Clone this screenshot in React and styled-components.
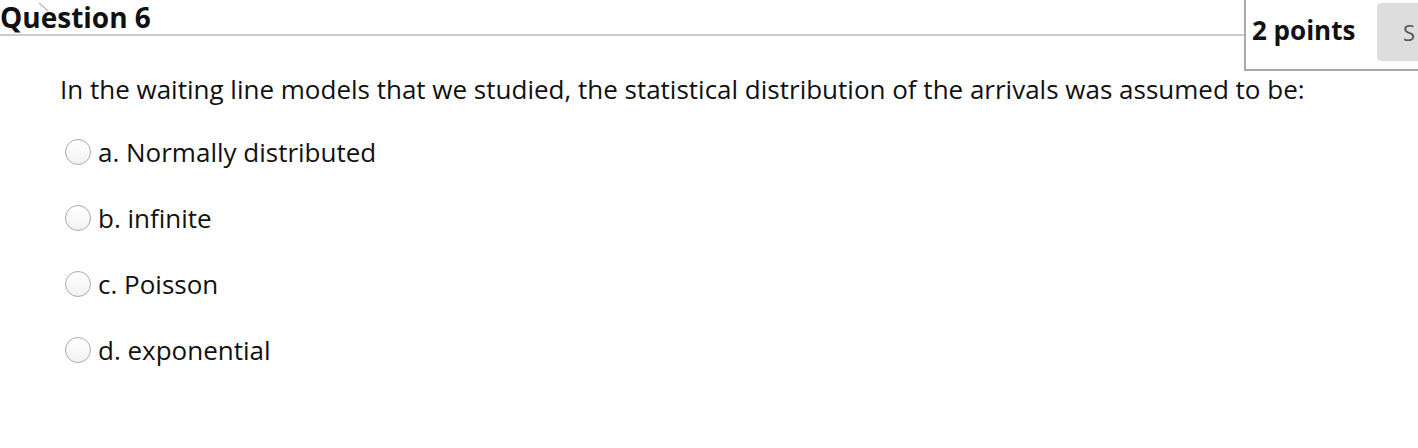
import React from 'react'
import styled, { createGlobalStyle } from 'styled-components'

const Global = createGlobalStyle`
  html, body {
    margin: 0;
    padding: 0;
    background: #fff;
  }
  body {
    font-family: 'Open Sans', 'Liberation Sans', sans-serif;
    color: #111;
    overflow: hidden;
  }
`

const Page = styled.div`
  width: 1418px;
  height: 448px;
  position: relative;
`

const Header = styled.div`
  display: flex;
  align-items: flex-start;
`

const Title = styled.h2`
  flex: 1;
  margin: 0;
  height: 34px;
  line-height: 34px;
  font-size: 28px;
  font-weight: 700;
  color: #111;
  border-bottom: 2px solid #ccc;
`

const PointsBox = styled.div`
  display: flex;
  align-items: flex-start;
  height: 69px;
  width: 166px;
  padding-left: 6px;
  border-left: 2px solid #aaa;
  border-bottom: 2px solid #aaa;
  flex: none;
`

const Points = styled.span`
  width: 125px;
  flex: none;
  white-space: nowrap;
  font-size: 26px;
  font-weight: 700;
  line-height: 61px;
  color: #111;
`

const SaveButton = styled.button`
  flex: 1;
  margin-top: 3px;
  height: 58px;
  border: none;
  border-radius: 4px 0 0 4px;
  background: #ddd;
  color: #555;
  font-family: inherit;
  font-size: 22px;
  text-align: left;
  padding: 0 0 0 26px;
`

const Arrow = styled.svg`
  position: absolute;
  left: 38px;
  top: 2px;
`

const Body = styled.div`
  padding: 0 0 0 60px;
  margin-top: -2px;
`

const Prompt = styled.p`
  margin: 0 0 27px;
  font-size: 26px;
  line-height: 40px;
  color: #111;
`

const Options = styled.div`
  display: flex;
  flex-direction: column;
  gap: 34px;
  padding-left: 5px;
`

const Option = styled.label`
  display: flex;
  align-items: center;
  gap: 7px;
  font-size: 26px;
  line-height: 32px;
  color: #111;
`

const Radio = styled.span`
  width: 24px;
  height: 24px;
  border-radius: 50%;
  border: 1px solid #aaa;
  background: linear-gradient(#fff, #f2f2f2);
  flex: none;
`

const answers = [
  'a. Normally distributed',
  'b. infinite',
  'c. Poisson',
  'd. exponential',
]

export default function App() {
  return (
    <Page>
      <Global />
      <Header>
        <Title>Question 6</Title>
        <PointsBox>
          <Points>2 points</Points>
          <SaveButton>S</SaveButton>
        </PointsBox>
      </Header>
      <Arrow width="14" height="12" viewBox="0 0 14 12">
        <path d="M1 1 L10 9" stroke="#bbb" strokeWidth="1.5" fill="none" />
      </Arrow>
      <Body>
        <Prompt>
          In the waiting line models that we studied, the statistical distribution of the arrivals was assumed to be:
        </Prompt>
        <Options>
          {answers.map((a) => (
            <Option key={a}>
              <Radio />
              {a}
            </Option>
          ))}
        </Options>
      </Body>
    </Page>
  )
}
